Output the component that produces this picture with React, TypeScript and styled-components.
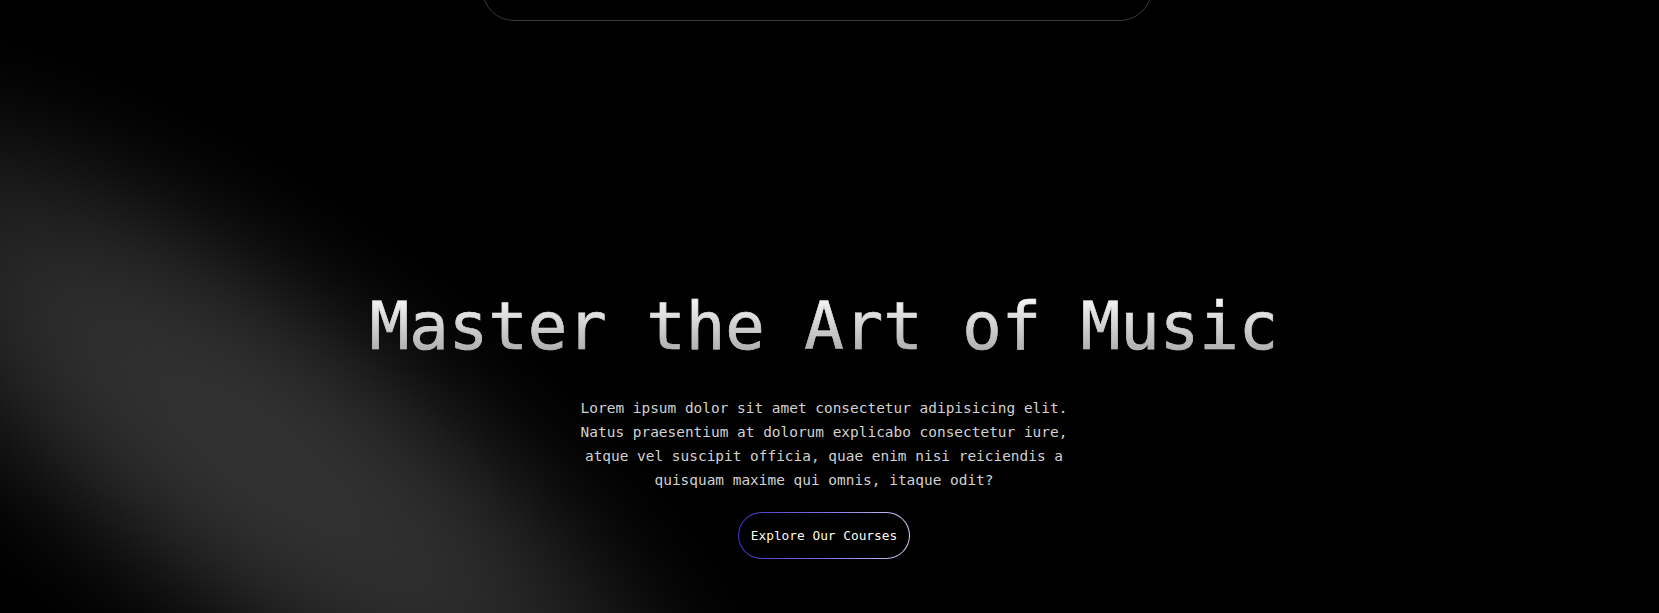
import styled, { createGlobalStyle } from 'styled-components'

const GlobalStyle = createGlobalStyle`
  html, body {
    margin: 0;
    padding: 0;
    background: #000;
    overflow: hidden;
  }
  body {
    font-family: "DejaVu Sans Mono", "Liberation Mono", monospace;
    color: #d0d0d0;
  }
`

export default function App() {
  return (
    <Page>
      <GlobalStyle />
      <Glow />
      <Content>
        <NavBar />
        <Hero>
          <Title>Master the Art of Music</Title>
          <Lead>
            Lorem ipsum dolor sit amet consectetur adipisicing elit. Natus praesentium at dolorum
            explicabo consectetur iure, atque vel suscipit officia, quae enim nisi reiciendis a
            quisquam maxime qui omnis, itaque odit?
          </Lead>
          <CtaButton>Explore Our Courses</CtaButton>
        </Hero>
      </Content>
    </Page>
  )
}

const Page = styled.div`
  position: relative;
  min-height: 100vh;
  overflow: hidden;
  background: #000;
`

// soft diagonal light band in the lower left
const Glow = styled.div`
  position: absolute;
  left: -340px;
  top: 255px;
  width: 1200px;
  height: 400px;
  transform: rotate(37deg);
  border-radius: 50%;
  background: radial-gradient(
    ellipse at center,
    rgba(52, 52, 52, 1) 0%,
    rgba(46, 46, 46, 1) 30%,
    rgba(26, 26, 26, 0.8) 55%,
    rgba(0, 0, 0, 0) 72%
  );
  filter: blur(45px);
  pointer-events: none;
`

const Content = styled.div`
  position: relative;
  padding-right: 11px;
  display: flex;
  flex-direction: column;
`

const NavBar = styled.nav`
  width: 670px;
  height: 81px;
  margin-top: -60px;
  margin-left: calc(50% - 342px);
  box-sizing: border-box;
  border: 1px solid #3a3a3a;
  border-radius: 32px;
  background: #000;
`

const Hero = styled.section`
  display: flex;
  flex-direction: column;
  align-items: center;
  padding-top: 266px;
`

const Title = styled.h1`
  margin: 0;
  font-family: "DejaVu Sans Mono", monospace;
  font-weight: normal;
  font-size: 65.6px;
  line-height: 1.2;
  white-space: nowrap;
  background: linear-gradient(to bottom, #ffffff 0%, #f0f0f0 20%, #9a9a9a 100%);
  -webkit-background-clip: text;
  background-clip: text;
  color: transparent;
  -webkit-text-stroke: 0.7px rgba(220, 220, 220, 0.35);
`

const Lead = styled.p`
  margin: 30px 0 0;
  max-width: 510px;
  font-size: 14.45px;
  line-height: 24px;
  text-align: center;
  color: #d2d2d2;
`

const CtaButton = styled.button`
  margin-top: 20px;
  height: 47px;
  padding: 0 12px;
  display: inline-flex;
  align-items: center;
  border: 1px solid transparent;
  border-radius: 999px;
  background:
    linear-gradient(#000, #000) padding-box,
    linear-gradient(to right, #4338ca, #7c6fe0 50%, #d8ccf5) border-box;
  font-family: "DejaVu Sans Mono", monospace;
  font-size: 12.8px;
  color: #fffaf0;
  cursor: pointer;
`
